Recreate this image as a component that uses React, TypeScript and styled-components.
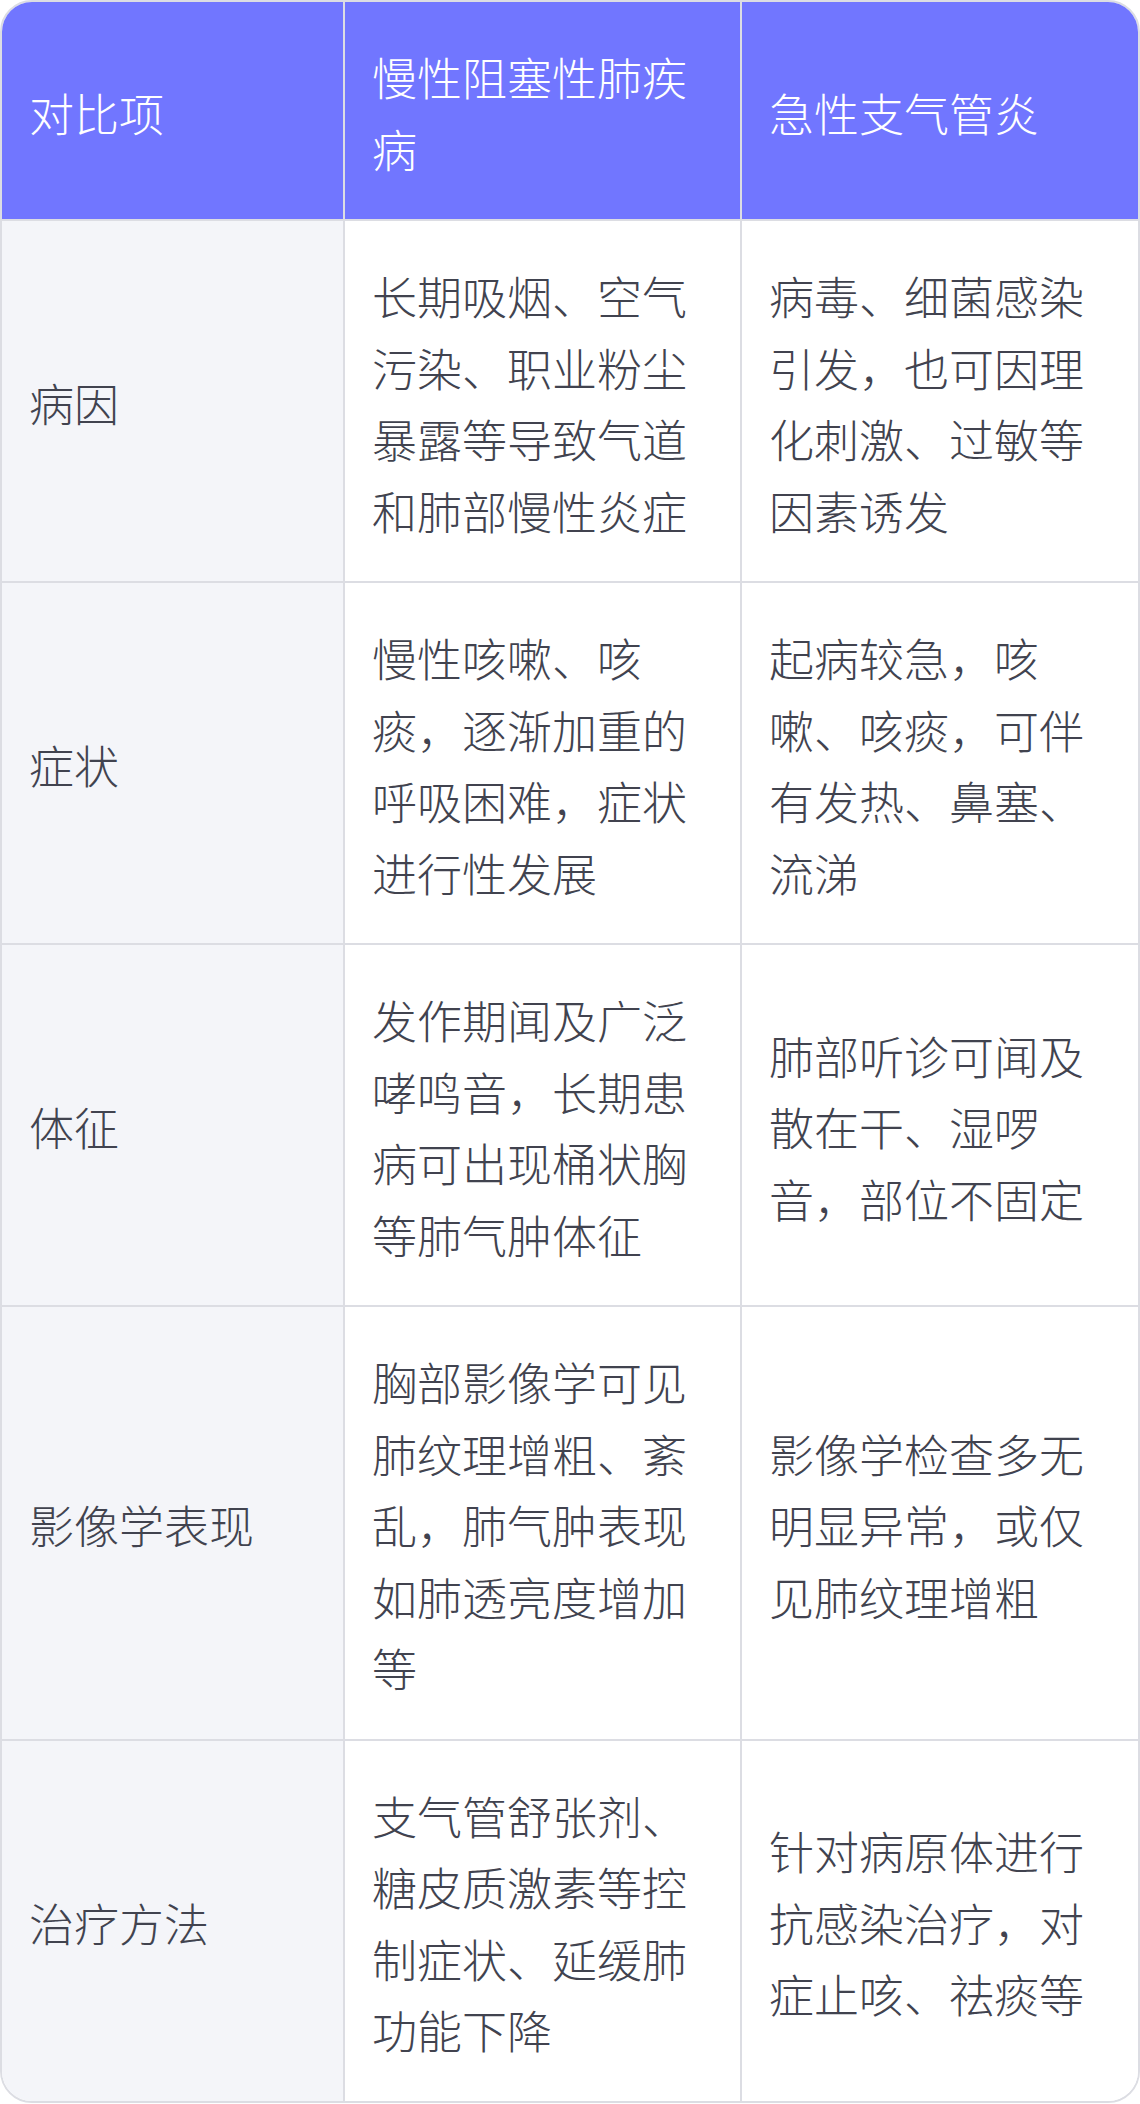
import styled, { createGlobalStyle } from "styled-components";

const GlobalStyle = createGlobalStyle`
  html, body {
    margin: 0;
    padding: 0;
    background: #ffffff;
  }
  body {
    font-family: "Noto Sans CJK SC", "Noto Sans", sans-serif;
  }
`;

interface Row {
  label: string;
  copd: string;
  acute: string;
}

const rows: Row[] = [
  {
    label: "病因",
    copd: "长期吸烟、空气污染、职业粉尘暴露等导致气道和肺部慢性炎症",
    acute: "病毒、细菌感染引发，也可因理化刺激、过敏等因素诱发",
  },
  {
    label: "症状",
    copd: "慢性咳嗽、咳痰，逐渐加重的呼吸困难，症状进行性发展",
    acute: "起病较急，咳嗽、咳痰，可伴有发热、鼻塞、流涕",
  },
  {
    label: "体征",
    copd: "发作期闻及广泛哮鸣音，长期患病可出现桶状胸等肺气肿体征",
    acute: "肺部听诊可闻及散在干、湿啰音，部位不固定",
  },
  {
    label: "影像学表现",
    copd: "胸部影像学可见肺纹理增粗、紊乱，肺气肿表现如肺透亮度增加等",
    acute: "影像学检查多无明显异常，或仅见肺纹理增粗",
  },
  {
    label: "治疗方法",
    copd: "支气管舒张剂、糖皮质激素等控制症状、延缓肺功能下降",
    acute: "针对病原体进行抗感染治疗，对症止咳、祛痰等",
  },
];

export default function App() {
  return (
    <>
      <GlobalStyle />
      <Frame>
        <Table>
          <colgroup>
            <LabelCol />
            <ValueCol />
            <col />
          </colgroup>
          <thead>
            <tr>
              <HeadCell>对比项</HeadCell>
              <HeadCell>慢性阻塞性肺疾病</HeadCell>
              <HeadCell>急性支气管炎</HeadCell>
            </tr>
          </thead>
          <tbody>
            {rows.map((row) => (
              <tr key={row.label}>
                <Cell $label>{row.label}</Cell>
                <Cell>{row.copd}</Cell>
                <Cell>{row.acute}</Cell>
              </tr>
            ))}
          </tbody>
        </Table>
      </Frame>
    </>
  );
}

const Frame = styled.div`
  width: 1140px;
  box-sizing: border-box;
  border: 2px solid #dcdde3;
  border-radius: 32px;
  overflow: hidden;
`;

const LabelCol = styled.col`
  width: 343px;
`;

const ValueCol = styled.col`
  width: 397px;
`;

const Table = styled.table`
  width: 100%;
  table-layout: fixed;
  border-collapse: separate;
  border-spacing: 0;

  tr > *:last-child {
    border-right: none;
  }
  tbody tr:last-child > td {
    border-bottom: none;
  }
`;

const HeadCell = styled.th`
  background: #7176ff;
  color: #ffffff;
  font-weight: 300;
  font-size: 45px;
  line-height: 71.5px;
  text-align: left;
  vertical-align: middle;
  padding: 4px 28px 0 27px;
  height: 219px;
  box-sizing: border-box;
  border-right: 2px solid #dcdde3;
  border-bottom: 2px solid #dcdde3;
`;

const Cell = styled.td<{ $label?: boolean }>`
  background: ${(p) => (p.$label ? "#f4f5f9" : "#ffffff")};
  color: #41434f;
  font-weight: 300;
  font-size: 45px;
  line-height: 71.5px;
  vertical-align: middle;
  padding: 39px 28px 35px 27px;
  border-right: 2px solid #dcdde3;
  border-bottom: 2px solid #dcdde3;
`;
